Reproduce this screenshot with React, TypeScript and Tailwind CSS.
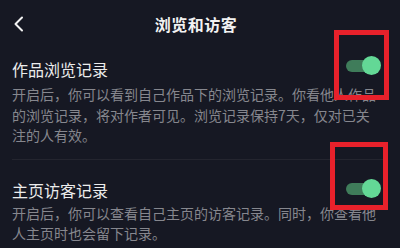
import React from 'react';

interface Setting {
  title: string;
  desc: string;
}

const settings: Setting[] = [
  {
    title: '作品浏览记录',
    desc: '开启后，你可以看到自己作品下的浏览记录。你看他人作品的浏览记录，将对作者可见。浏览记录保持7天，仅对已关注的人有效。',
  },
  {
    title: '主页访客记录',
    desc: '开启后，你可以查看自己主页的访客记录。同时，你查看他人主页时也会留下记录。',
  },
];

function Toggle() {
  return (
    <div className="relative flex h-[20px] w-[35px] items-center">
      <div className="h-[12px] w-[30px] rounded-full bg-[#3f7c5a]" />
      <div className="absolute right-0 top-0 h-[19px] w-[19px] rounded-full bg-[#63d896]" />
    </div>
  );
}

export default function App() {
  return (
    <div
      className="relative h-[248px] w-[400px] overflow-hidden bg-[#161823] text-[#ececec]"
      style={{ fontFamily: '"Noto Sans CJK SC", "Noto Sans", sans-serif' }}
    >
      <header className="grid h-[44px] grid-cols-[44px_1fr_44px] items-center pt-[3px]">
        <div className="flex justify-center pr-[6px]">
          <svg width="12" height="16" viewBox="0 0 12 16" fill="none">
            <polyline points="9,1.5 2.5,8 9,14.5" stroke="#f2f2f2" strokeWidth="2" strokeLinecap="round" strokeLinejoin="round" />
          </svg>
        </div>
        <h1 className="text-center text-[16px] font-bold tracking-[0.5px] text-[#f2f2f2] pr-[8px]">浏览和访客</h1>
        <div />
      </header>

      <section className="px-3 pt-[13px]">
        <div className="flex items-center justify-between">
          <h2 className="text-[16px] leading-[24px]">{settings[0].title}</h2>
          <div className="mr-[7px] -mt-[6px]">
            <Toggle />
          </div>
        </div>
        <p className="mt-[3px] pr-[8px] text-[14px] leading-[20.5px] text-[#86878e]">{settings[0].desc}</p>
        <div className="mt-[13px] h-px bg-[#24252f]" />
      </section>

      <section className="px-3 pt-[18px]">
        <div className="flex items-center justify-between">
          <h2 className="text-[16px] leading-[24px]">{settings[1].title}</h2>
          <div className="mr-[7px] -mt-[2px]">
            <Toggle />
          </div>
        </div>
        <p className="mt-[1px] pr-[8px] text-[14px] leading-[20.5px] text-[#86878e]">{settings[1].desc}</p>
      </section>

      {/* annotation boxes over the toggles */}
      <div className="absolute left-[334px] top-[30px] h-[70px] w-[55px] border-[5px] border-[#e8212b]" />
      <div className="absolute left-[330px] top-[142px] h-[68px] w-[58px] border-[5px] border-[#e8212b]" />
    </div>
  );
}
